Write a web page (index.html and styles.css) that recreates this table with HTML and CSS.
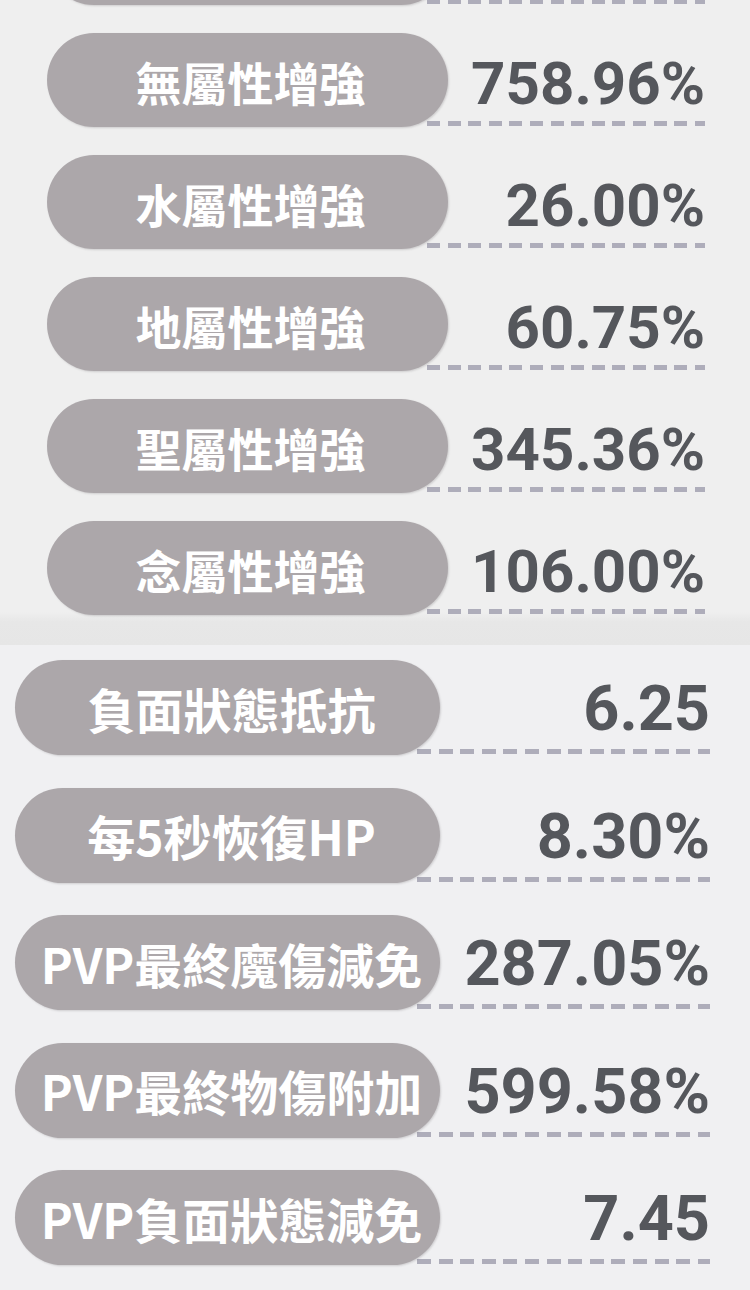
FILE: index.html
```html
<!DOCTYPE html>
<html lang="zh-Hant">
<head>
<meta charset="utf-8">
<link rel="stylesheet" href="styles.css">
</head>
<body>
<section class="sec sec-top">
  <div class="row row-ghost">
    <div class="pill"></div>
    <div class="val"><span class="dash"></span></div>
  </div>
  <div class="row">
    <div class="pill">無屬性增強</div>
    <div class="val"><span class="num">758.96%</span><span class="dash"></span></div>
  </div>
  <div class="row">
    <div class="pill">水屬性增強</div>
    <div class="val"><span class="num">26.00%</span><span class="dash"></span></div>
  </div>
  <div class="row">
    <div class="pill">地屬性增強</div>
    <div class="val"><span class="num">60.75%</span><span class="dash"></span></div>
  </div>
  <div class="row">
    <div class="pill">聖屬性增強</div>
    <div class="val"><span class="num">345.36%</span><span class="dash"></span></div>
  </div>
  <div class="row">
    <div class="pill">念屬性增強</div>
    <div class="val"><span class="num">106.00%</span><span class="dash"></span></div>
  </div>
</section>
<section class="sec sec-bottom">
  <div class="row">
    <div class="pill">負面狀態抵抗</div>
    <div class="val"><span class="num">6.25</span><span class="dash"></span></div>
  </div>
  <div class="row">
    <div class="pill">每5秒恢復HP</div>
    <div class="val"><span class="num">8.30%</span><span class="dash"></span></div>
  </div>
  <div class="row">
    <div class="pill">PVP最終魔傷減免</div>
    <div class="val"><span class="num">287.05%</span><span class="dash"></span></div>
  </div>
  <div class="row">
    <div class="pill">PVP最終物傷附加</div>
    <div class="val"><span class="num">599.58%</span><span class="dash"></span></div>
  </div>
  <div class="row">
    <div class="pill">PVP負面狀態減免</div>
    <div class="val"><span class="num">7.45</span><span class="dash"></span></div>
  </div>
</section>
</body>
</html>
```
FILE: styles.css
```css
html, body {
  margin: 0;
  padding: 0;
}
body {
  width: 750px;
  height: 1290px;
  overflow: hidden;
  background: #f0f0f2;
  font-family: "Noto Sans CJK TC", "Noto Sans", sans-serif;
}
.sec {
  display: flex;
  flex-direction: column;
  overflow: hidden;
}
.sec-top {
  height: 645px;
  padding: 0 45px 0 47px;
  box-sizing: border-box;
  background: linear-gradient(#efefef 0, #efefef 612px, #e7e7e7 622px, #e6e6e6 645px);
}
.sec-bottom {
  padding: 15px 40px 0 15px;
}
.row {
  display: flex;
  align-items: stretch;
  flex-shrink: 0;
}
.sec-top .row {
  height: 94px;
  margin-bottom: 28px;
}
.sec-top .row-ghost {
  margin-top: -89px;
}
.sec-bottom .row {
  height: 95px;
  margin-bottom: 32.5px;
}
.pill {
  position: relative;
  z-index: 1;
  display: flex;
  align-items: center;
  justify-content: center;
  background: #aca7aa;
  color: #ffffff;
  font-weight: 700;
  border-radius: 48px;
  box-shadow: 1px 1px 2px rgba(60, 55, 60, 0.18);
  white-space: nowrap;
}
.sec-top .pill {
  width: 401px;
  font-size: 46px;
  padding-top: 1px;
  padding-left: 6px;
  box-sizing: border-box;
}
.sec-bottom .pill {
  width: 425px;
  font-size: 48px;
  padding-left: 8px;
  box-sizing: border-box;
}
.val {
  flex: 1;
  display: flex;
  flex-direction: column;
  justify-content: flex-end;
  align-items: stretch;
}
.sec-top .val {
  margin-left: -21px;
  padding-bottom: 1px;
}
.sec-bottom .val {
  margin-left: -23px;
  padding-bottom: 0;
}
.num {
  display: block;
  text-align: right;
  font-family: Roboto, "Liberation Sans", Arial, sans-serif;
  font-weight: 700;
  color: #55575c;
  line-height: 1;
  white-space: nowrap;
}
.sec-top .num {
  font-size: 60px;
  margin-bottom: 7px;
}
.sec-bottom .num {
  font-size: 63px;
  margin-bottom: 9px;
}
.dash {
  display: block;
  height: 5px;
  background: repeating-linear-gradient(to right, #aeadba 0, #aeadba 13px, transparent 13px, transparent 20.6px);
}
.sec-bottom .dash {
  margin-bottom: 1px;
  background: repeating-linear-gradient(to right, #aeadba 0, #aeadba 14px, transparent 14px, transparent 21.6px);
}
```
